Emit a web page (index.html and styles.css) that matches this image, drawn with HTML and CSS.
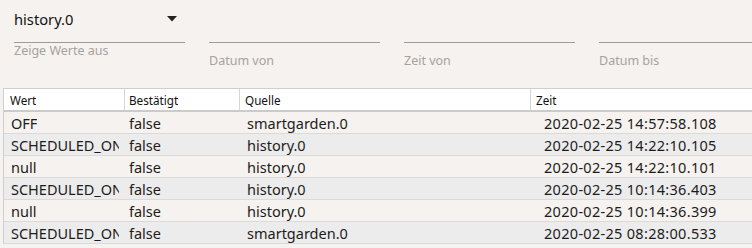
FILE: index.html
```html
<!DOCTYPE html>
<html>
<head>
<meta charset="utf-8">
<link rel="stylesheet" href="styles.css">
</head>
<body>
<div class="filters">
  <div class="field field-select">
    <div class="select">
      <span class="select-value">history.0</span>
      <svg class="arrow" width="10" height="6" viewBox="0 0 10 6"><path d="M0 0H10L5 5.5Z" fill="#222"/></svg>
    </div>
    <div class="line"></div>
    <div class="helper">Zeige Werte aus</div>
  </div>
  <div class="field">
    <div class="input"></div>
    <div class="line"></div>
    <div class="label">Datum von</div>
  </div>
  <div class="field">
    <div class="input"></div>
    <div class="line"></div>
    <div class="label">Zeit von</div>
  </div>
  <div class="field field-last">
    <div class="input"></div>
    <div class="line"></div>
    <div class="label">Datum bis</div>
  </div>
</div>
<div class="table">
  <div class="row head">
    <div class="c c1"><span>Wert</span></div>
    <div class="c c2"><span>Bestätigt</span></div>
    <div class="c c3"><span>Quelle</span></div>
    <div class="c c4"><span>Zeit</span></div>
  </div>
  <div class="row odd">
    <div class="c c1"><span>OFF</span></div>
    <div class="c c2"><span>false</span></div>
    <div class="c c3"><span>smartgarden.0</span></div>
    <div class="c c4"><span>2020-02-25 14:57:58.108</span></div>
  </div>
  <div class="row even">
    <div class="c c1"><span>SCHEDULED_ON</span></div>
    <div class="c c2"><span>false</span></div>
    <div class="c c3"><span>history.0</span></div>
    <div class="c c4"><span>2020-02-25 14:22:10.105</span></div>
  </div>
  <div class="row odd">
    <div class="c c1"><span>null</span></div>
    <div class="c c2"><span>false</span></div>
    <div class="c c3"><span>history.0</span></div>
    <div class="c c4"><span>2020-02-25 14:22:10.101</span></div>
  </div>
  <div class="row even">
    <div class="c c1"><span>SCHEDULED_ON</span></div>
    <div class="c c2"><span>false</span></div>
    <div class="c c3"><span>history.0</span></div>
    <div class="c c4"><span>2020-02-25 10:14:36.403</span></div>
  </div>
  <div class="row odd">
    <div class="c c1"><span>null</span></div>
    <div class="c c2"><span>false</span></div>
    <div class="c c3"><span>history.0</span></div>
    <div class="c c4"><span>2020-02-25 10:14:36.399</span></div>
  </div>
  <div class="row even">
    <div class="c c1"><span>SCHEDULED_ON</span></div>
    <div class="c c2"><span>false</span></div>
    <div class="c c3"><span>smartgarden.0</span></div>
    <div class="c c4"><span>2020-02-25 08:28:00.533</span></div>
  </div>
</div>
</body>
</html>
```
FILE: styles.css
```css
html, body {
  margin: 0;
  padding: 0;
  background: #f5f2ef;
  font-family: "Noto Sans", "Open Sans", sans-serif;
  color: #1c1c1c;
  overflow: hidden;
}
.filters {
  display: flex;
  gap: 24px;
  padding-left: 14px;
  height: 88px;
}
.field {
  width: 171px;
  flex: none;
  display: flex;
  flex-direction: column;
}
.field-last {
  width: 160px;
  flex: 1;
}
.select {
  height: 42px;
  display: flex;
  align-items: center;
  justify-content: space-between;
  box-sizing: border-box;
}
.select-value {
  font-size: 14.7px;
  line-height: 20px;
  margin-top: -4px;
  color: #111;
}
.arrow {
  margin-right: 8px;
  margin-top: -5px;
}
.input {
  height: 42px;
}
.line {
  height: 1px;
  background: #a09c99;
}
.helper {
  font-size: 12.5px;
  line-height: 16px;
  color: #a7a29f;
}
.label {
  font-size: 12.5px;
  line-height: 16px;
  margin-top: 10px;
  color: #a7a29f;
}
.table {
  margin-left: 3px;
  border-top: 1px solid #cfcfcf;
  border-left: 1px solid #cfcfcf;
}
.row {
  display: flex;
  height: 21px;
  border-bottom: 1px solid #dadada;
}
.head {
  background: #fff;
  height: 21px;
  border-bottom: 2px solid #cbcbcb;
}
.odd { background: #f5f2ef; }
.even { background: #ececec; }
.c {
  flex: none;
  overflow: hidden;
  white-space: nowrap;
  display: flex;
  align-items: center;
  box-sizing: border-box;
}
.c span { overflow: hidden; display: block; min-width: 0; }
.c1 { width: 121px; padding-left: 7px; padding-right: 6px; }
.c2 { width: 115px; padding-left: 4px; }
.c3 { width: 291px; padding-left: 7px; }
.c4 { flex: 1; padding-left: 13px; }
.head .c { font-size: 11.7px; color: #111; border-right: 1px solid #d6d6d6; }
.head .c1 { padding-left: 6px; }
.head .c3 { padding-left: 5px; }
.head .c4 { padding-left: 5px; border-right: none; }
.row:not(.head) .c { font-size: 14.5px; }
.row:not(.head) .c4 { letter-spacing: 0.3px; }
```
